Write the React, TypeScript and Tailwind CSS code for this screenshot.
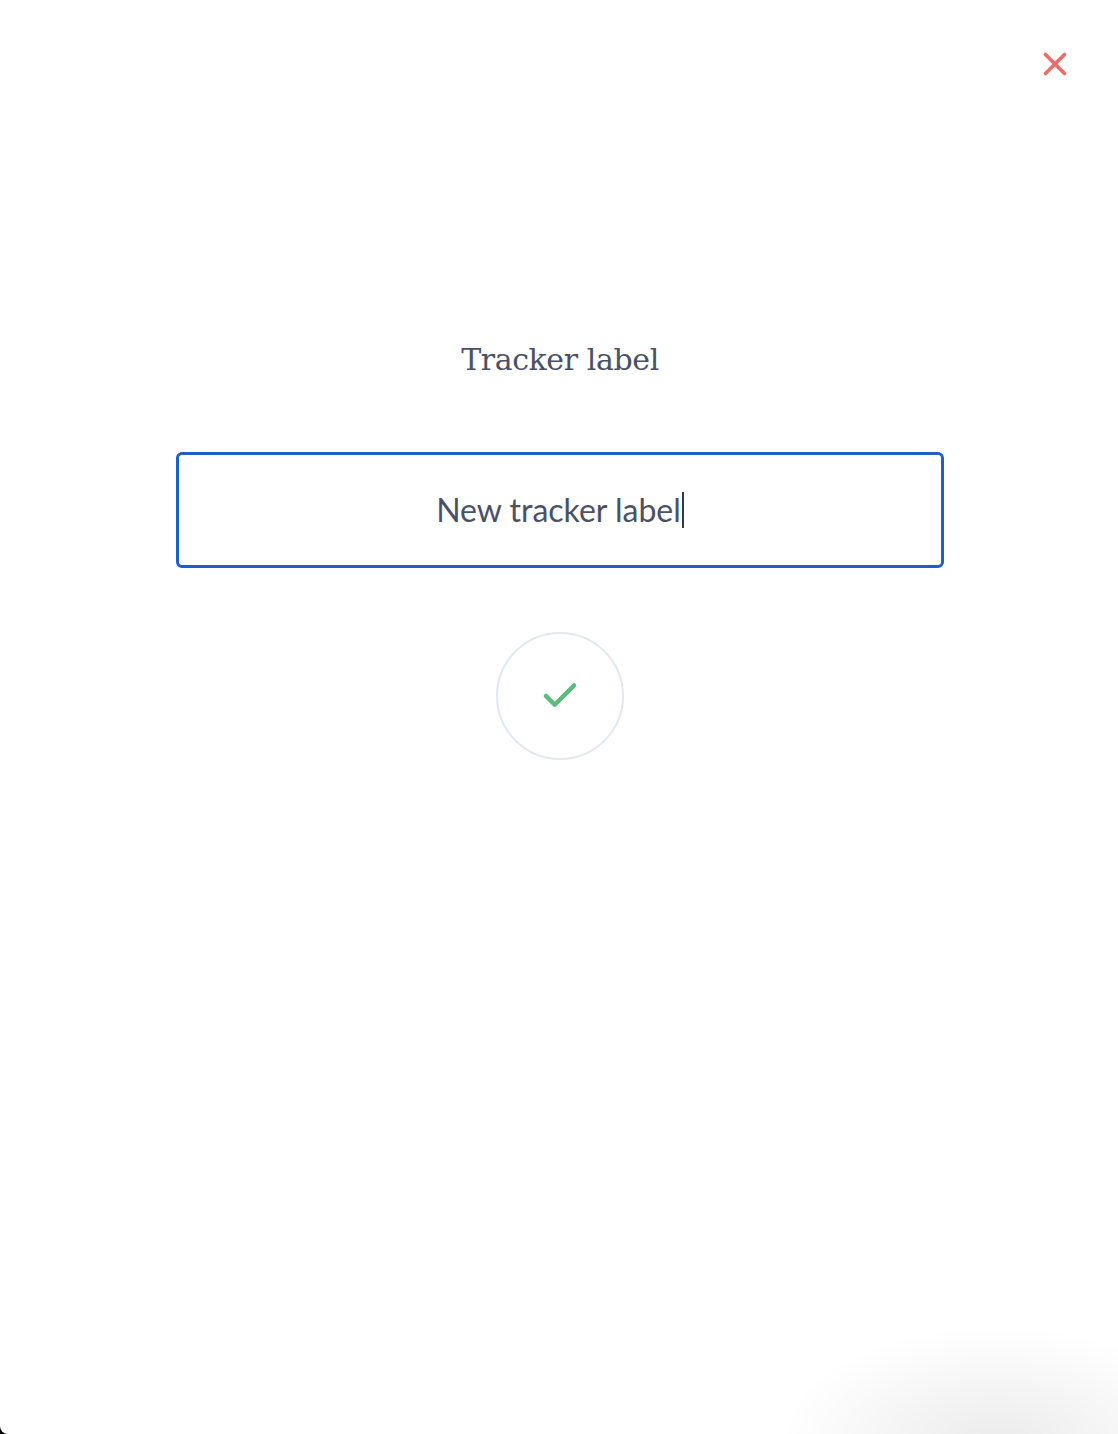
import { X, Check } from "lucide-react";

export default function App() {
  return (
    <div className="w-[1118px] h-[1434px] bg-black">
      <div className="relative w-full h-full bg-white rounded-bl-[8px] overflow-hidden flex flex-col items-center pl-[2px]">
        {/* soft shadow in bottom right corner */}
        <div className="pointer-events-none absolute -right-[100px] -bottom-[130px] w-[440px] h-[240px] rounded-full bg-[radial-gradient(ellipse_at_center,_rgba(0,0,0,0.08),_rgba(0,0,0,0)_70%)]" />

        <button className="absolute right-[44px] top-[45px] text-[#e86f6a]">
          <X size={38} strokeWidth={2.4} />
        </button>

        <h1 className="mt-[336px] text-[30px] leading-[48px] text-[#4a5164] font-['DejaVu_Serif',serif] tracking-[-0.4px]">
          Tracker label
        </h1>

        <div className="mt-[68px] w-[768px] h-[116px] border-[3px] border-[#1f5fc9] rounded-[6px] flex items-center justify-center">
          <span className="text-[32px] text-[#4a5164] font-['Lato',sans-serif] flex items-center">
            New tracker label
            <span className="ml-[1px] w-[2px] h-[36px] bg-[#333a47]" />
          </span>
        </div>

        <button className="mt-[64px] w-[128px] h-[128px] rounded-full border-2 border-[#e3e8ef] flex items-center justify-center text-[#5dbb7c]">
          <Check size={42} strokeWidth={2.6} />
        </button>
      </div>
    </div>
  );
}
